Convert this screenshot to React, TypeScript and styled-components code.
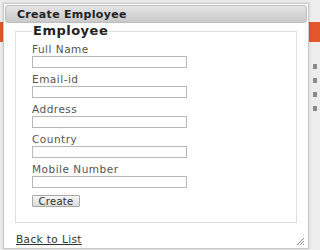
import styled, { createGlobalStyle } from "styled-components";

const GlobalStyle = createGlobalStyle`
  html, body {
    margin: 0;
    padding: 0;
    background: #f0f0f0;
    font-family: "DejaVu Sans", Verdana, sans-serif;
  }
`;

const Page = styled.div`
  position: relative;
  width: 320px;
  height: 250px;
  overflow: hidden;
  background: #ededed;
`;

const Band = styled.div`
  margin-top: 22px;
  height: 20px;
  background: #e2572a;
`;

const SideText = styled.div`
  display: flex;
  flex-direction: column;
  align-items: flex-end;
  gap: 9px;
  padding: 22px 3px 0 0;
`;

const SideBit = styled.span<{ $w: number }>`
  display: block;
  width: ${(p) => p.$w}px;
  height: 5px;
  background: #8a8a8a;
`;

const Dialog = styled.div`
  position: absolute;
  top: 3px;
  left: 3px;
  width: 302px;
  height: 242px;
  padding: 1px;
  background: #fff;
  border: 1px solid #c8c8c8;
  box-shadow: 0 0 3px rgba(0, 0, 0, 0.15);
`;

const TitleBar = styled.div`
  height: 16px;
  display: flex;
  align-items: center;
  padding-left: 11px;
  border: 1px solid #bdbdbd;
  border-radius: 3px;
  background: linear-gradient(#e4e4e4, #c9c9c9);
  font-size: 11px;
  letter-spacing: 0.3px;
  font-weight: bold;
  color: #222;
`;

const Body = styled.div`
  padding: 0 8px 0 10px;
`;

const Fieldset = styled.fieldset`
  margin: 0;
  padding: 0 16px 15px 16px;
  border: 1px solid #dedede;
  width: 248px;
`;

const Legend = styled.legend`
  padding: 0 1px;
  font-size: 13px;
  letter-spacing: 0.5px;
  line-height: 16px;
  font-weight: bold;
  color: #222;
`;

const Field = styled.div`
  display: flex;
  flex-direction: column;
  margin-top: 3px;
  & + & {
    margin-top: 4px;
  }
`;

const Label = styled.label`
  font-size: 10.5px;
  line-height: 14px;
  color: #555;
  letter-spacing: 0.5px;
`;

const Input = styled.input`
  box-sizing: border-box;
  width: 155px;
  height: 12px;
  margin: 0;
  padding: 0 2px;
  border: 1px solid #b8b8b8;
  background: #fff;
`;

const Button = styled.button`
  margin-top: 7px;
  box-sizing: border-box;
  width: 48px;
  height: 12px;
  padding: 0;
  display: flex;
  align-items: center;
  justify-content: center;
  border: 1px solid #a8a8a8;
  border-radius: 1px;
  background: linear-gradient(#f6f6f6, #dcdcdc);
  font-family: "DejaVu Sans", Verdana, sans-serif;
  font-size: 10px;
  letter-spacing: 0.3px;
  color: #333;
`;

const BackLink = styled.a`
  display: inline-block;
  margin-top: 10px;
  margin-left: 1px;
  font-size: 10.5px;
  line-height: 13px;
  color: #333;
  text-decoration: underline;
  letter-spacing: 0.4px;
`;

const Grip = styled.svg`
  position: absolute;
  right: 3px;
  bottom: 2px;
`;

const fields = ["Full Name", "Email-id", "Address", "Country", "Mobile Number"];

export default function App() {
  return (
    <>
      <GlobalStyle />
      <Page>
        <Band />
        <SideText>
          <SideBit $w={4} />
          <SideBit $w={4} />
          <SideBit $w={4} />
          <SideBit $w={4} />
        </SideText>
        <Dialog>
          <TitleBar>Create Employee</TitleBar>
          <Body>
            <Fieldset>
              <Legend>Employee</Legend>
              {fields.map((f) => (
                <Field key={f}>
                  <Label>{f}</Label>
                  <Input type="text" />
                </Field>
              ))}
              <Button>Create</Button>
            </Fieldset>
            <BackLink href="#">Back to List</BackLink>
          </Body>
          <Grip width="10" height="10" viewBox="0 0 10 10">
            <path d="M9 2 L2 9 M9 5 L5 9 M9 8 L8 9" stroke="#888" strokeWidth="1" />
          </Grip>
        </Dialog>
      </Page>
    </>
  );
}
